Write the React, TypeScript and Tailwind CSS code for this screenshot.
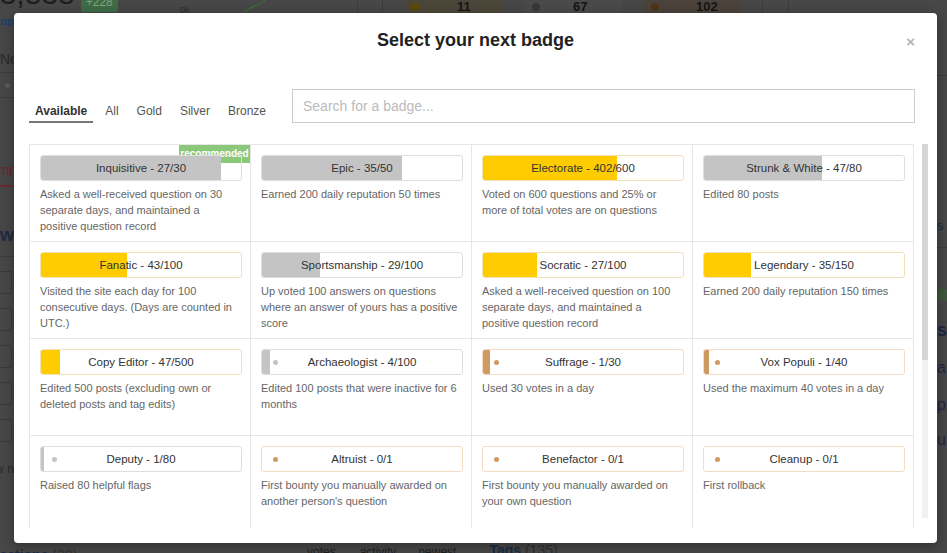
import React from "react";

type Tone = "gold" | "silver" | "bronze";

type Badge = {
  name: string;
  cur: number;
  max: number;
  tone: Tone;
  desc: string;
  dot?: boolean;
  recommended?: boolean;
};

const badges: Badge[] = [
  { name: "Inquisitive", cur: 27, max: 30, tone: "silver", recommended: true, desc: "Asked a well-received question on 30 separate days, and maintained a positive question record" },
  { name: "Epic", cur: 35, max: 50, tone: "silver", desc: "Earned 200 daily reputation 50 times" },
  { name: "Electorate", cur: 402, max: 600, tone: "gold", desc: "Voted on 600 questions and 25% or more of total votes are on questions" },
  { name: "Strunk & White", cur: 47, max: 80, tone: "silver", desc: "Edited 80 posts" },
  { name: "Fanatic", cur: 43, max: 100, tone: "gold", desc: "Visited the site each day for 100 consecutive days. (Days are counted in UTC.)" },
  { name: "Sportsmanship", cur: 29, max: 100, tone: "silver", desc: "Up voted 100 answers on questions where an answer of yours has a positive score" },
  { name: "Socratic", cur: 27, max: 100, tone: "gold", desc: "Asked a well-received question on 100 separate days, and maintained a positive question record" },
  { name: "Legendary", cur: 35, max: 150, tone: "gold", desc: "Earned 200 daily reputation 150 times" },
  { name: "Copy Editor", cur: 47, max: 500, tone: "gold", desc: "Edited 500 posts (excluding own or deleted posts and tag edits)" },
  { name: "Archaeologist", cur: 4, max: 100, tone: "silver", dot: true, desc: "Edited 100 posts that were inactive for 6 months" },
  { name: "Suffrage", cur: 1, max: 30, tone: "bronze", dot: true, desc: "Used 30 votes in a day" },
  { name: "Vox Populi", cur: 1, max: 40, tone: "bronze", dot: true, desc: "Used the maximum 40 votes in a day" },
  { name: "Deputy", cur: 1, max: 80, tone: "silver", dot: true, desc: "Raised 80 helpful flags" },
  { name: "Altruist", cur: 0, max: 1, tone: "bronze", dot: true, desc: "First bounty you manually awarded on another person's question" },
  { name: "Benefactor", cur: 0, max: 1, tone: "bronze", dot: true, desc: "First bounty you manually awarded on your own question" },
  { name: "Cleanup", cur: 0, max: 1, tone: "bronze", dot: true, desc: "First rollback" },
];

const tones: Record<Tone, { fill: string; border: string; dot: string }> = {
  gold: { fill: "bg-[#ffcc00]", border: "border-[#eee2bb]", dot: "bg-[#ffcc00]" },
  silver: { fill: "bg-[#c4c4c4]", border: "border-[#dedede]", dot: "bg-[#c4c4c4]" },
  bronze: { fill: "bg-[#cf9a62]", border: "border-[#f3dcc4]", dot: "bg-[#cf9a62]" },
};

const tabs = ["Available", "All", "Gold", "Silver", "Bronze"];

function BadgeCell({ badge }: { badge: Badge }) {
  const t = tones[badge.tone];
  const fill = Math.round((200 * badge.cur) / badge.max);
  return (
    <div className="relative h-[97px] border-b border-r border-[#e6e6e6] pl-[10px] pt-[10px]">
      {badge.recommended && (
        <span className="absolute right-0 top-0 h-[18px] w-[71px] bg-[#8cc87a] text-center text-[10px] font-bold leading-[18px] text-white">
          recommended
        </span>
      )}
      <div className={`relative h-[26px] w-[202px] overflow-hidden rounded-[3px] border ${t.border}`}>
        <div className={`absolute inset-y-0 left-0 ${t.fill}`} style={{ width: fill }} />
        {badge.dot && <span className={`absolute left-[11px] top-[10px] size-[5px] rounded-full ${t.dot}`} />}
        <div className="relative text-center text-[11.5px] leading-[24px] text-[#333]">
          {badge.name} - {badge.cur}/{badge.max}
        </div>
      </div>
      <p className="mt-[5px] w-[198px] text-[11px] leading-[16px] text-[#666]">{badge.desc}</p>
    </div>
  );
}

function BackgroundPage() {
  return (
    <div className="flex h-full flex-col bg-[#474747]">
      {/* top strip of the profile page */}
      <div className="flex h-[13px] shrink-0 items-end overflow-hidden">
        <div className="flex w-[170px] shrink-0 items-end">
          <span className="-ml-[17px] mb-[4px] text-[30px] leading-[30px] text-[#1d1d1d]">23,838</span>
          <span className="mb-[1px] ml-[6px] rounded-[2px] bg-[#3f6b45] px-[5px] text-[12px] leading-[20px] text-[#7ea583]">+228</span>
        </div>
        <div className="flex h-full w-[187px] shrink-0 items-end">
          <span className="mb-[-2px] ml-[10px] text-[9px] leading-[10px] text-[#2c2c2c]">0k</span>
          <svg width="30" height="13" viewBox="0 0 30 13" className="ml-[52px]">
            <path d="M2 12 L12 6 L16 5 L24 0" fill="none" stroke="#3e6b3a" strokeWidth="1.2" />
          </svg>
        </div>
        <div className="h-full w-[26px] shrink-0 border-x border-[#3c3c3c]" />
        <div className="ml-[22px] flex h-full w-[98px] shrink-0 items-center bg-[#4b4638] pl-[6px]">
          <span className="size-[8px] rounded-full bg-[#5e4b08]" />
          <span className="ml-[38px] text-[13px] font-bold leading-none text-[#151515]">11</span>
        </div>
        <div className="ml-[21px] flex h-full w-[98px] shrink-0 items-center bg-[#4a4a4a] pl-[8px]">
          <span className="size-[8px] rounded-full bg-[#383838]" />
          <span className="ml-[33px] text-[13px] font-bold leading-none text-[#151515]">67</span>
        </div>
        <div className="ml-[21px] flex h-full w-[98px] shrink-0 items-center bg-[#4b433b] pl-[8px]">
          <span className="size-[8px] rounded-full bg-[#4e3517]" />
          <span className="ml-[37px] text-[13px] font-bold leading-none text-[#151515]">102</span>
        </div>
        <div className="ml-[21px] h-full w-[27px] shrink-0 border-x border-[#3c3c3c]" />
      </div>

      {/* middle columns */}
      <div className="flex min-h-0 flex-1">
        <div className="-ml-[106px] flex w-[120px] shrink-0 flex-col text-right">
          <span className="mt-[3px] text-[11px] font-bold leading-[11px] text-[#1d3f6e]">Desktop</span>
          <span className="ml-[106px] mt-[24px] text-left text-[14px] leading-[16px] text-[#2a2a2a]">Next</span>
          <div className="mt-[5px] flex h-[26px] items-center justify-end border-y border-[#3c3c3c] pr-[4px]">
            <span className="size-[5px] rounded-full bg-[#5a5a5a]" />
          </div>
          <span className="mt-[64px] text-[14px] leading-[16px] text-[#6a2828]">Summr</span>
          <div className="mt-[7px] h-[2px] bg-[#6e2a2a]" />
          <span className="mt-[38px] text-[18px] font-bold leading-[20px] text-[#1c2a44]">Answ</span>
          <div className="mt-[11px] h-px bg-[#3c3c3c]" />
          {[0, 1, 2, 3, 4].map((i) => (
            <div key={i} className="ml-auto mr-[2px] mt-[14px] h-[23px] w-[40px] rounded-[2px] border border-[#3a3a3a] first:mt-[24px]" />
          ))}
          <span className="mt-[20px] text-[12px] leading-[14px] text-[#2a2a2a]">view n</span>
        </div>
        <div className="flex-1" />
        <div className="-mr-[90px] flex w-[100px] shrink-0 flex-col">
          <div className="mt-[62px] h-px bg-[#3c3c3c]" />
          <span className="mt-[143px] text-[13px] leading-[14px] text-[#1c2a44]">s r</span>
          <div className="mt-[14px] h-px bg-[#3c3c3c]" />
          <div className="mt-[41px] h-[12px] w-[60px] bg-[#3f553d]" />
          <span className="mt-[20px] text-[18px] font-bold leading-[18px] text-[#1c2a44]">s</span>
          <span className="mt-[20px] text-[16px] leading-[18px] text-[#1c2a44]">a</span>
          <span className="mt-[19px] text-[16px] leading-[18px] text-[#1c2a44]">p</span>
          <span className="mt-[17px] text-[16px] leading-[18px] text-[#1c2a44]">ur</span>
        </div>
      </div>

      {/* bottom strip */}
      <div className="flex h-[10px] shrink-0 items-start overflow-hidden">
        <div className="w-[307px] shrink-0">
          <span className="-ml-[20px] inline-block text-[14px] font-bold leading-[14px] text-[#1c2a44]">
            Questions <span className="font-normal text-[#2e2e2e]">(38)</span>
          </span>
        </div>
        <span className="mt-[3px] text-[12px] leading-[12px] text-[#1e1e1e]">votes</span>
        <span className="ml-[24px] mt-[3px] text-[12px] leading-[12px] text-[#1e1e1e]">activity</span>
        <span className="ml-[22px] mt-[3px] text-[12px] leading-[12px] text-[#1e1e1e]">newest</span>
        <span className="ml-[33px] text-[14px] font-bold leading-[14px] text-[#1c2a44]">
          Tags <span className="font-normal text-[#2e2e2e]">(135)</span>
        </span>
      </div>
    </div>
  );
}

export default function App() {
  return (
    <div className="relative h-[553px] w-[947px] overflow-hidden font-['Liberation_Sans',Arial,sans-serif]">
      <BackgroundPage />

      {/* modal */}
      <div className="absolute left-[14px] top-[13px] flex h-[530px] w-[923px] flex-col rounded-[4px] bg-white shadow-[0_3px_12px_rgba(0,0,0,0.35)]">
        <div className="relative h-[76px] shrink-0 pt-[17px] text-center">
          <h2 className="text-[18px] font-bold leading-[20px] text-[#222]">Select your next badge</h2>
          <span className="absolute right-[22px] top-[22px] text-[15px] font-bold leading-[14px] text-[#b4b4b4]">×</span>
        </div>

        <div className="flex shrink-0 items-end pl-[15px] pr-[22px]">
          <div className="flex gap-[6px]">
            {tabs.map((tab, i) => (
              <span
                key={tab}
                className={
                  i === 0
                    ? "border-b-2 border-[#777] px-[6px] pb-[2px] text-[12px] font-bold leading-[15px] text-[#333]"
                    : "border-b-2 border-transparent px-[6px] pb-[2px] text-[12px] leading-[15px] text-[#555]"
                }
              >
                {tab}
              </span>
            ))}
          </div>
          <input
            className="ml-[20px] h-[34px] min-w-0 flex-1 border border-[#ccc] px-[10px] text-[14px] text-[#333] outline-none placeholder:text-[#bbb]"
            placeholder="Search for a badge..."
          />
        </div>

        <div className="mt-[21px] flex pl-[15px]">
          <div className="h-[384px] w-[885px] shrink-0 overflow-hidden">
            <div className="grid grid-cols-[repeat(4,221px)] border-l border-t border-[#e6e6e6]">
              {badges.map((b) => (
                <BadgeCell key={b.name} badge={b} />
              ))}
            </div>
          </div>
          <div className="ml-[8px] h-[374px] w-[6px] bg-[#f1f1f1]">
            <div className="h-[216px] bg-[#d5d5d5]" />
          </div>
        </div>
      </div>
    </div>
  );
}
